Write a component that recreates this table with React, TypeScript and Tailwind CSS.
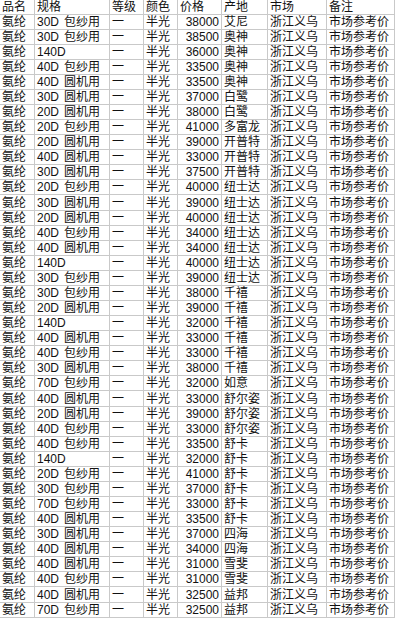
import React from 'react';

// 规格, 价格, 产地 per row; other columns are the same for every row
const rows: [string, string, string, string][] = [
  ['30D', '包纱用', '38000', '艾尼'],
  ['30D', '包纱用', '38500', '奥神'],
  ['140D', '', '36000', '奥神'],
  ['40D', '包纱用', '33500', '奥神'],
  ['40D', '圆机用', '33500', '奥神'],
  ['30D', '圆机用', '37000', '白鹭'],
  ['20D', '圆机用', '38000', '白鹭'],
  ['20D', '包纱用', '41000', '多富龙'],
  ['20D', '圆机用', '39000', '开普特'],
  ['40D', '圆机用', '33000', '开普特'],
  ['30D', '圆机用', '37500', '开普特'],
  ['20D', '包纱用', '40000', '纽士达'],
  ['30D', '圆机用', '39000', '纽士达'],
  ['20D', '圆机用', '40000', '纽士达'],
  ['40D', '包纱用', '34000', '纽士达'],
  ['40D', '圆机用', '34000', '纽士达'],
  ['140D', '', '40000', '纽士达'],
  ['30D', '包纱用', '39000', '纽士达'],
  ['30D', '包纱用', '38000', '千禧'],
  ['20D', '圆机用', '39000', '千禧'],
  ['140D', '', '32000', '千禧'],
  ['40D', '圆机用', '33000', '千禧'],
  ['40D', '包纱用', '33000', '千禧'],
  ['30D', '圆机用', '38000', '千禧'],
  ['70D', '包纱用', '32000', '如意'],
  ['40D', '圆机用', '33000', '舒尔姿'],
  ['20D', '圆机用', '39000', '舒尔姿'],
  ['40D', '包纱用', '33000', '舒尔姿'],
  ['40D', '包纱用', '33500', '舒卡'],
  ['140D', '', '32000', '舒卡'],
  ['20D', '包纱用', '41000', '舒卡'],
  ['30D', '包纱用', '37000', '舒卡'],
  ['70D', '包纱用', '33000', '舒卡'],
  ['40D', '圆机用', '33500', '舒卡'],
  ['30D', '圆机用', '37000', '四海'],
  ['40D', '圆机用', '34000', '四海'],
  ['40D', '圆机用', '31000', '雪斐'],
  ['40D', '包纱用', '31000', '雪斐'],
  ['40D', '圆机用', '32500', '益邦'],
  ['70D', '包纱用', '32500', '益邦'],
];

const cell = 'border-r border-b border-[#c9c9c9] pl-[2px] flex items-center overflow-hidden whitespace-nowrap';

const App = () => {
  return (
    <div
      className="w-[400px] h-[618px] bg-white text-[#111] text-[12px] leading-none overflow-hidden"
      style={{ fontFamily: '"Liberation Sans", "Noto Sans CJK SC", sans-serif' }}
    >
      <div className="grid grid-cols-[35px_75px_34px_34px_44px_46px_59px_68px]">
        {/* Header */}
        <div className={`${cell} h-[15px]`}>品名</div>
        <div className={`${cell} h-[15px]`}>规格</div>
        <div className={`${cell} h-[15px]`}>等级</div>
        <div className={`${cell} h-[15px]`}>颜色</div>
        <div className={`${cell} h-[15px]`}>价格</div>
        <div className={`${cell} h-[15px]`}>产地</div>
        <div className={`${cell} h-[15px]`}>市场</div>
        <div className={`${cell} h-[15px]`}>备注</div>

        {rows.map((r, i) => {
          const h = i % 13 === 12 ? 'h-[16px]' : 'h-[15px]';
          return (
            <React.Fragment key={i}>
              <div className={`${cell} ${h}`}>氨纶</div>
              <div className={`${cell} ${h}`}>
                <span className="inline-block w-[27px]">{r[0]}</span>
                <span>{r[1]}</span>
              </div>
              <div className={`${cell} ${h}`}>一</div>
              <div className={`${cell} ${h}`}>半光</div>
              <div className={`${cell} ${h} justify-end pr-[2px]`}>{r[2]}</div>
              <div className={`${cell} ${h}`}>{r[3]}</div>
              <div className={`${cell} ${h}`}>浙江义乌</div>
              <div className={`${cell} ${h}`}>市场参考价</div>
            </React.Fragment>
          );
        })}
      </div>
    </div>
  );
};

export default App;
